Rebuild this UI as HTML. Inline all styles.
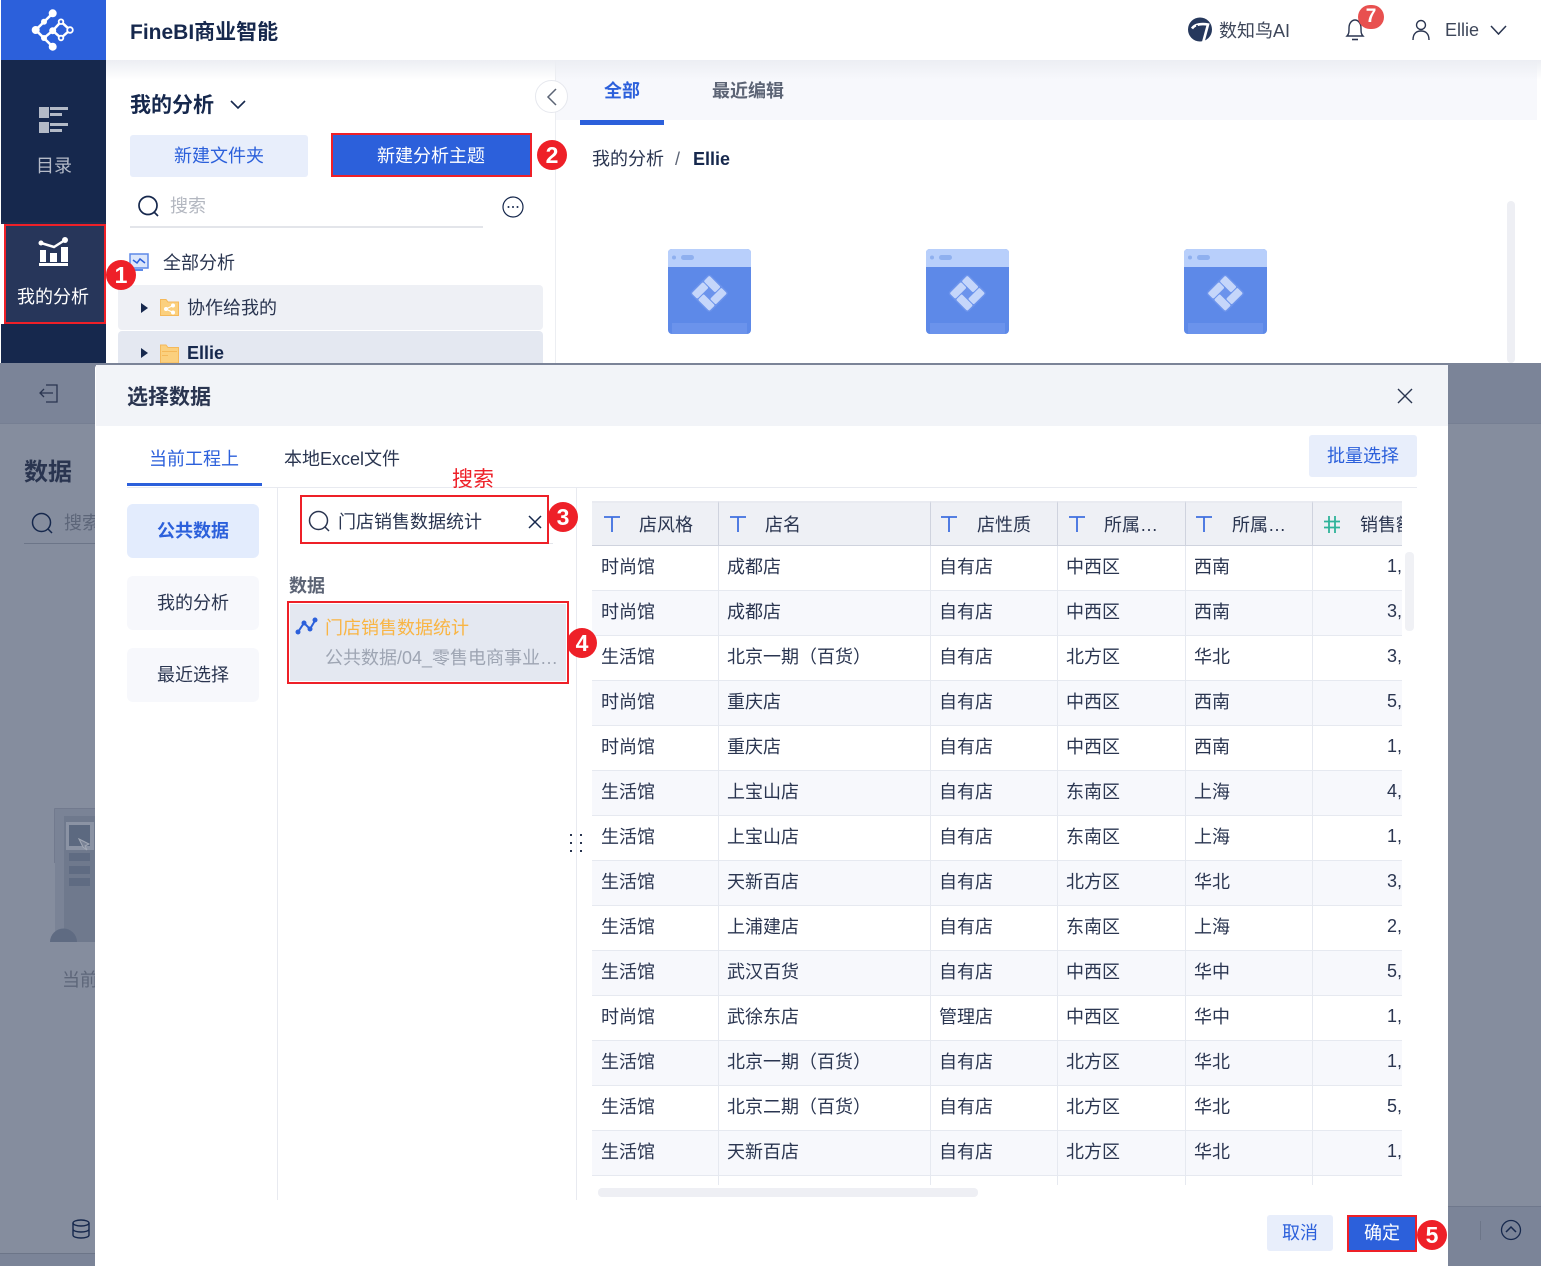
<!DOCTYPE html>
<html lang="zh"><head><meta charset="utf-8"><title>FineBI</title>
<style>
html,body{margin:0;padding:0;background:#fff}
#p{position:relative;width:1541px;height:1266px;overflow:hidden;font-family:"Liberation Sans","Noto Sans CJK SC",sans-serif;font-size:18px;color:#2a3550;background:#fff}
.a{position:absolute;white-space:nowrap}
.t{position:absolute;white-space:nowrap;line-height:24px;height:24px}
.b{font-weight:700}
.blue{color:#2c60db}
.c{position:absolute;width:30px;height:30px;border-radius:50%;background:#ee2028;color:#fff;font-size:23px;font-weight:700;line-height:30px;text-align:center;z-index:9}
.r{position:absolute;border:2px solid #ee2028;box-sizing:border-box}
svg{position:absolute;overflow:visible}
table{border-collapse:separate;border-spacing:0;table-layout:fixed;width:848px;position:absolute;left:0;top:0}
td,th{box-sizing:border-box;height:45px;padding:0 0 4px 8px;border-right:1px solid #e6e9f0;border-bottom:1px solid #e6e9f0;font-weight:400;text-align:left;white-space:nowrap;overflow:hidden;font-size:18px;color:#2a3550}
td:first-child{padding-left:9px}
th{height:45px;background:#eef0f5;padding:0 0 0 46px;border-bottom:1px solid #cfd3de;border-right:1px solid #cfd3de;border-top:2px solid #e9ebf1}
th:first-child,th:last-child{padding-left:47px}
tr:nth-child(even) td{background:#f7f8fc}
tr.e td{height:20px;padding:0}
td.n{padding-left:74px}
</style></head><body><div id="p">

<!-- top app -->
<div class="a" style="left:1px;top:0;width:105px;height:60px;background:#2c60db"></div>
<svg style="left:0;top:0" width="106" height="60"><g stroke="#fff" stroke-width="2.500" fill="none"><path d="M52.700 13.300L35.700 30L52.700 46.700M35.700 30L44 38L52.700 30.700L61 38L70 30L61 21.700L52.700 30.700"/></g><g fill="#fff"><circle cx="52.700" cy="13.300" r="4"/><circle cx="44" cy="21.700" r="3"/><circle cx="35.700" cy="30" r="4"/><circle cx="52.700" cy="30.700" r="3.500"/><circle cx="44" cy="38" r="3"/><circle cx="52.700" cy="46.700" r="4"/></g><g fill="#2c60db" stroke="#fff" stroke-width="1.800"><circle cx="61" cy="21.700" r="2.300"/><circle cx="70" cy="30" r="2.800"/><circle cx="61" cy="38" r="2.300"/></g></svg>
<div class="a" style="left:1px;top:60px;width:105px;height:303px;background:#16284d"></div>
<div class="a" style="left:0;top:222px;width:4px;height:102px;background:#fff"></div>
<div class="a" style="left:1px;top:222px;width:105px;height:2px;background:#1f2e50"></div>
<svg style="left:0;top:0" width="106" height="140"><g fill="#b3bac7"><rect x="39" y="107" width="10" height="11"/><rect x="39" y="122" width="10" height="11"/><rect x="50" y="107" width="18" height="3"/><rect x="50" y="113" width="12" height="3"/><rect x="50" y="123" width="18" height="3"/><rect x="50" y="129" width="12" height="3"/></g></svg>
<div class="t" style="left:36px;top:154px;color:#b5bbc8">目录</div>
<div class="a" style="left:4px;top:224px;width:102px;height:100px;background:#27365a;border:2px solid #ee2028;box-sizing:border-box"></div>
<svg style="left:0;top:0" width="106" height="300"><g fill="#fff"><rect x="40" y="250" width="6" height="12"/><rect x="50" y="253" width="7" height="9"/><rect x="61" y="247" width="7" height="15"/><rect x="39" y="263" width="29" height="3"/></g><path d="M41 243L54 247L65 240" stroke="#fff" stroke-width="2.500" fill="none"/><circle cx="41" cy="243" r="2.500" fill="#fff"/><circle cx="65" cy="240" r="3" fill="#fff"/></svg>
<div class="t" style="left:17px;top:285px;color:#fff">我的分析</div>

<div class="a" style="left:106px;top:60px;width:1435px;height:20px;background:linear-gradient(#eceef3,#ffffff00);z-index:3"></div>
<div class="a" style="left:556px;top:60px;width:981px;height:60px;background:#f7f8fc"></div>
<div class="a" style="left:555px;top:60px;width:1px;height:303px;background:#eceef2"></div>
<div class="t b" style="left:130px;top:21px;font-size:21px;color:#16284d">FineBI商业智能</div>
<div class="t b" style="left:130px;top:94px;font-size:21px;color:#16284d">我的分析</div>
<svg style="left:229px;top:99px" width="18" height="12"><path d="M2 2L9 9L16 2" stroke="#16284d" stroke-width="1.600" fill="none"/></svg>
<div class="a" style="left:535px;top:80px;width:33px;height:33px;border-radius:50%;background:#fff;border:1px solid #e6e8ee;box-sizing:border-box;z-index:4"></div>
<svg style="left:535px;top:80px;z-index:5" width="33" height="33"><path d="M21 9L13 17L21 25" stroke="#5c6475" stroke-width="1.500" fill="none"/></svg>
<div class="a" style="left:130px;top:135px;width:178px;height:42px;background:#e8eefb;border-radius:3px"></div>
<div class="t blue" style="left:174px;top:144px">新建文件夹</div>
<div class="a" style="left:331px;top:133px;width:201px;height:44px;background:#2c60db;border:2px solid #ee2028;box-sizing:border-box"></div>
<div class="t" style="left:377px;top:144px;color:#fff">新建分析主题</div>
<svg style="left:136px;top:194px" width="24" height="24"><circle cx="12" cy="11.500" r="9" stroke="#16284d" stroke-width="1.700" fill="none"/><path d="M18 18L22 22" stroke="#16284d" stroke-width="1.700"/></svg>
<div class="t" style="left:170px;top:194px;color:#b3b7c0">搜索</div>
<div class="a" style="left:130px;top:226px;width:353px;height:2px;background:#e3e5ea"></div>
<svg style="left:501px;top:196px" width="24" height="24"><circle cx="12" cy="11" r="10" stroke="#16284d" stroke-width="1.200" fill="none"/><circle cx="7.500" cy="11" r="1" fill="#16284d"/><circle cx="12" cy="11" r="1" fill="#16284d"/><circle cx="16.500" cy="11" r="1" fill="#16284d"/></svg>
<svg style="left:128px;top:252px" width="24" height="24"><rect x="2" y="2" width="18" height="14" fill="#dbe6fb" stroke="#5d89e8" stroke-width="1.500"/><path d="M5 8L9 11L12 7L17 11" stroke="#2c60db" stroke-width="1.500" fill="none"/><rect x="7" y="17" width="8" height="2" fill="#5d89e8"/></svg>
<div class="t" style="left:163px;top:251px">全部分析</div>
<div class="a" style="left:118px;top:285px;width:425px;height:45px;background:#eef0f5;border-radius:4px"></div>
<div class="a" style="left:118px;top:331px;width:425px;height:32px;background:#e4e8f1;border-radius:4px 4px 0 0"></div>
<svg style="left:140px;top:302px" width="10" height="60"><path d="M1 1L8 6L1 11Z" fill="#16284d"/><path d="M1 46L8 51L1 56Z" fill="#16284d"/></svg>
<svg style="left:159px;top:297px" width="22" height="21"><path d="M1.500 2.500H7L9 5H19.500V18.500H1.500Z" fill="#fbd07e" stroke="#f5b95a"/><g fill="#fff"><circle cx="7" cy="12" r="2"/><circle cx="14" cy="8.500" r="2"/><circle cx="14" cy="15.500" r="2"/></g><path d="M7 12L14 8.500M7 12L14 15.500" stroke="#fff"/></svg>
<div class="t" style="left:187px;top:296px">协作给我的</div>
<svg style="left:159px;top:343px" width="22" height="20"><path d="M1.500 2H7L9 4.500H19.500V20H1.500Z" fill="#fbd07e" stroke="#f5b95a"/><rect x="3" y="8" width="15" height="1" fill="#f5b95a"/><rect x="3" y="12" width="6" height="1" fill="#f5b95a"/></svg>
<div class="t b" style="left:187px;top:341px;color:#16284d">Ellie</div>

<svg style="left:1188px;top:17px" width="26" height="26"><circle cx="12" cy="12.500" r="12" fill="#26385c"/><path d="M4 11.500C7 7 14 6.500 20 7.500L15 26" stroke="#fff" stroke-width="2.600" fill="none"/><path d="M9 8V17" stroke="#26385c" stroke-width="1.600"/><circle cx="8.500" cy="15.500" r="2.600" fill="#26385c"/><path d="M3 13L7 12L7 20Z M11 13L13 12L11 22Z" fill="#fff" opacity="0"/></svg>
<div class="t" style="left:1219px;top:19px;color:#3d4659">数知鸟AI</div>
<svg style="left:1344px;top:18px" width="24" height="24"><path d="M3 18C5 16 5 14 5 10C5 5 8 2 11 2C14 2 17 5 17 10C17 14 17 16 19 18Z" stroke="#2a3550" stroke-width="1.400" fill="none"/><path d="M8 21.500H14" stroke="#2a3550" stroke-width="1.600"/></svg>
<div class="a" style="left:1358px;top:5px;width:26px;height:24px;border-radius:12px;background:#e8504f;color:#fff;text-align:center;line-height:24px;font-size:19px;font-weight:700">7</div>
<svg style="left:1411px;top:19px" width="20" height="22"><circle cx="10" cy="6" r="4.500" stroke="#2a3550" stroke-width="1.400" fill="none"/><path d="M2 21C2 14 6 12 10 12C14 12 18 14 18 21" stroke="#2a3550" stroke-width="1.400" fill="none"/></svg>
<div class="t" style="left:1445px;top:18px;color:#3d4659">Ellie</div>
<svg style="left:1489px;top:24px" width="19" height="13"><path d="M2 2L9.500 10L17 2" stroke="#2a3550" stroke-width="1.500" fill="none"/></svg>

<div class="t b blue" style="left:604px;top:79px">全部</div>
<div class="t b" style="left:712px;top:79px;color:#5c6475">最近编辑</div>
<div class="a" style="left:580px;top:120px;width:84px;height:5px;background:#2c60db"></div>
<div class="t" style="left:592px;top:147px;color:#2a3550">我的分析</div>
<div class="t" style="left:675px;top:147px;color:#5c6475">/</div>
<div class="t b" style="left:693px;top:147px;color:#16284d">Ellie</div>
<div class="a" style="left:1507px;top:201px;width:8px;height:162px;background:#eeeff4;border-radius:4px"></div>

<svg style="left:668px;top:249px" width="600" height="86"><defs><g id="d"><rect width="83" height="85" rx="4" fill="#5d89e8"/><path d="M0 18V4Q0 0 4 0H79Q83 0 83 4V18Z" fill="#b8cffb"/><rect x="4" y="74" width="75" height="11" fill="#6b93ec"/><circle cx="6" cy="8.500" r="2" fill="#8fb0ef"/><rect x="13" y="6" width="13" height="5" rx="2.500" fill="#8fb0ef"/><g transform="translate(41.300 44.300) rotate(45)"><rect x="-14" y="-14" width="28" height="28" rx="3" fill="#6b93ec"/><g fill="#c5d6fa"><rect x="-12.500" y="-12.500" width="16" height="8" rx="1.500"/><rect x="4.500" y="-12.500" width="8" height="16" rx="1.500"/><rect x="-3.500" y="4.500" width="16" height="8" rx="1.500"/><rect x="-12.500" y="-3.500" width="8" height="16" rx="1.500"/></g></g></g></defs><use href="#d"/><use href="#d" x="258"/><use href="#d" x="516"/></svg>

<!-- overlay background -->
<div class="a" style="left:0;top:363px;width:1541px;height:903px;background:#858d9e;z-index:10">
 <div class="a" style="left:0;top:0;width:1541px;height:60px;background:#7b8498;border-bottom:1px solid #767f93"></div>
 <svg style="left:38px;top:19px" width="24" height="24"><path d="M8 3H19V20H8M15 11H2M6 7L2 11L6 15" stroke="#2a3550" stroke-width="1.300" fill="none"/></svg>
 <div class="t b" style="left:24px;top:98px;font-size:24px;color:#2a3550">数据</div>
 <svg style="left:30px;top:148px" width="24" height="24"><circle cx="11.500" cy="11.500" r="9" stroke="#16284d" stroke-width="1.500" fill="none"/><path d="M18 18L22 22" stroke="#16284d" stroke-width="1.500"/></svg>
 <div class="t" style="left:64px;top:148px;color:#5d6679">搜索</div>
 <div class="a" style="left:24px;top:180px;width:80px;height:1px;background:#6c7588"></div>
 <svg style="left:50px;top:445px" width="50" height="135"><path d="M5 55V1H50" stroke="#6c7589" stroke-width="1.500" fill="none"/><rect x="5" y="1" width="45" height="133" fill="#7a8396"/><rect x="14" y="8" width="36" height="126" fill="#6f798d"/><rect x="16" y="14" width="28" height="28" fill="#8b93a4"/><rect x="19" y="17" width="21" height="21" fill="#5c6980"/><path d="M29 31L39 36L35 38L37 42L33 39Z" fill="#7a8396" stroke="#a3a9b6"/><rect x="19" y="45" width="21" height="8" fill="#5f6b82"/><rect x="19" y="58" width="21" height="8" fill="#5f6b82"/><rect x="19" y="70" width="21" height="8" fill="#5f6b82"/><path d="M0 134A13 13 0 0 1 27 134Z" fill="#5f6b82"/></svg>
 <div class="t" style="left:62px;top:605px;color:#5d6679">当前</div>
 <svg style="left:71px;top:856px" width="20" height="20"><ellipse cx="10" cy="4" rx="8" ry="3" fill="none" stroke="#16284d" stroke-width="1.400"/><path d="M2 4V16C2 20 18 20 18 16V4M2 10C2 14 18 14 18 10" fill="none" stroke="#16284d" stroke-width="1.400"/></svg>
 <div class="a" style="left:0;top:890px;width:100px;height:13px;background:#7b8498;border-top:1px solid #6c7588"></div>
 <div class="a" style="left:1448px;top:843px;width:93px;height:60px;background:#7b8498;border-top:1px solid #6f788c"></div>
 <div class="a" style="left:1480px;top:858px;width:1px;height:19px;background:#6c7588"></div>
 <svg style="left:1500px;top:856px" width="22" height="22"><circle cx="11" cy="11" r="9.500" fill="none" stroke="#16284d" stroke-width="1.300"/><path d="M6 13L11 8L16 13" fill="none" stroke="#16284d" stroke-width="1.500"/></svg>
</div>

<!-- modal -->
<div class="a" style="left:95px;top:365px;width:1353px;height:901px;background:#fff;z-index:11;border-radius:3px 3px 0 0;overflow:visible">
 <div class="a" style="left:1px;top:0;width:1352px;height:61px;background:#f2f4f8"></div>
 <div class="t b" style="left:32px;top:21px;font-size:21px;color:#2a3550">选择数据</div>
 <svg style="left:1302px;top:23px" width="16" height="16"><path d="M1 1L15 15M15 1L1 15" stroke="#2a3550" stroke-width="1.400"/></svg>

 <div class="t blue" style="left:54px;top:82px">当前工程上</div>
 <div class="a" style="left:32px;top:118px;width:135px;height:3px;background:#2c60db"></div>
 <div class="t" style="left:189px;top:82px">本地Excel文件</div>
 <div class="a" style="left:32px;top:122px;width:1290px;height:1px;background:#e8eaf0"></div>
 <div class="a" style="left:1214px;top:70px;width:108px;height:42px;background:#e8eefb;border-radius:3px"></div>
 <div class="t blue" style="left:1232px;top:79px">批量选择</div>
 <div class="t" style="left:357px;top:103px;font-size:21px;color:#ee2028">搜索</div>

 <div class="a" style="left:32px;top:139px;width:132px;height:54px;background:#e3ecfd;border-radius:6px"></div>
 <div class="t b blue" style="left:62px;top:154px">公共数据</div>
 <div class="a" style="left:32px;top:211px;width:132px;height:54px;background:#f7f8fc;border-radius:6px"></div>
 <div class="t" style="left:62px;top:226px">我的分析</div>
 <div class="a" style="left:32px;top:283px;width:132px;height:54px;background:#f7f8fc;border-radius:6px"></div>
 <div class="t" style="left:62px;top:298px">最近选择</div>

 <div class="a" style="left:182px;top:123px;width:1px;height:712px;background:#e8eaf0"></div>
 <div class="a" style="left:481px;top:123px;width:1px;height:712px;background:#e8eaf0"></div>
 <div class="a" style="left:205px;top:178px;width:253px;height:1px;background:#e3e5ea"></div>
 <div class="r" style="left:205px;top:130px;width:249px;height:49px"></div>
 <svg style="left:212px;top:144px" width="24" height="24"><circle cx="11.500" cy="11.500" r="9" stroke="#2a3550" stroke-width="1.500" fill="none"/><path d="M18 18L22 22" stroke="#2a3550" stroke-width="1.500"/></svg>
 <div class="t" style="left:243px;top:145px">门店销售数据统计</div>
 <svg style="left:432px;top:149px" width="16" height="16"><path d="M2 2L14 14M14 2L2 14" stroke="#16284d" stroke-width="1.500"/></svg>
 <div class="t b" style="left:194px;top:209px;color:#5c6475">数据</div>
 <div class="r" style="left:192px;top:236px;width:282px;height:83px;background:#e4e8f1;box-shadow:inset 0 0 0 1px #fff"></div>
 <svg style="left:200px;top:250px" width="24" height="22"><path d="M3 17L9 8L15 14L21 4" stroke="#2c60db" stroke-width="2" fill="none"/><circle cx="3" cy="17" r="2.500" fill="#2c60db"/><circle cx="9" cy="8" r="2.500" fill="#2c60db"/><circle cx="15" cy="14" r="2.500" fill="#2c60db"/><circle cx="20" cy="5" r="2.500" fill="#2c60db"/></svg>
 <div class="t" style="left:230px;top:251px;color:#f9b544">门店销售数据统计</div>
 <div class="t" style="left:230px;top:281px;color:#9ea5b3">公共数据/04_零售电商事业…</div>

 <svg style="left:470px;top:465px" width="20" height="24"><g fill="#2a3550"><rect x="5" y="4" width="2" height="2"/><rect x="15" y="4" width="2" height="2"/><rect x="5" y="12" width="2" height="2"/><rect x="15" y="12" width="2" height="2"/><rect x="5" y="20" width="2" height="2"/><rect x="15" y="20" width="2" height="2"/></g></svg>

 <!-- table -->
 <div class="a" style="left:497px;top:136px;width:810px;height:684px;overflow:hidden">
 <table><colgroup><col style="width:127px"><col style="width:212px"><col style="width:127px"><col style="width:128px"><col style="width:127px"><col style="width:127px"></colgroup>
 <thead><tr><th>店风格</th><th>店名</th><th>店性质</th><th>所属…</th><th>所属…</th><th>销售额</th></tr></thead>
 <tbody>
 <tr><td>时尚馆</td><td>成都店</td><td>自有店</td><td>中西区</td><td>西南</td><td class="n">1,</td></tr>
 <tr><td>时尚馆</td><td>成都店</td><td>自有店</td><td>中西区</td><td>西南</td><td class="n">3,</td></tr>
 <tr><td>生活馆</td><td>北京一期（百货）</td><td>自有店</td><td>北方区</td><td>华北</td><td class="n">3,</td></tr>
 <tr><td>时尚馆</td><td>重庆店</td><td>自有店</td><td>中西区</td><td>西南</td><td class="n">5,</td></tr>
 <tr><td>时尚馆</td><td>重庆店</td><td>自有店</td><td>中西区</td><td>西南</td><td class="n">1,</td></tr>
 <tr><td>生活馆</td><td>上宝山店</td><td>自有店</td><td>东南区</td><td>上海</td><td class="n">4,</td></tr>
 <tr><td>生活馆</td><td>上宝山店</td><td>自有店</td><td>东南区</td><td>上海</td><td class="n">1,</td></tr>
 <tr><td>生活馆</td><td>天新百店</td><td>自有店</td><td>北方区</td><td>华北</td><td class="n">3,</td></tr>
 <tr><td>生活馆</td><td>上浦建店</td><td>自有店</td><td>东南区</td><td>上海</td><td class="n">2,</td></tr>
 <tr><td>生活馆</td><td>武汉百货</td><td>自有店</td><td>中西区</td><td>华中</td><td class="n">5,</td></tr>
 <tr><td>时尚馆</td><td>武徐东店</td><td>管理店</td><td>中西区</td><td>华中</td><td class="n">1,</td></tr>
 <tr><td>生活馆</td><td>北京一期（百货）</td><td>自有店</td><td>北方区</td><td>华北</td><td class="n">1,</td></tr>
 <tr><td>生活馆</td><td>北京二期（百货）</td><td>自有店</td><td>北方区</td><td>华北</td><td class="n">5,</td></tr>
 <tr><td>生活馆</td><td>天新百店</td><td>自有店</td><td>北方区</td><td>华北</td><td class="n">1,</td></tr>
 <tr class="e"><td></td><td></td><td></td><td></td><td></td><td></td></tr>
 </tbody></table>
 <svg style="left:0;top:0" width="810" height="45"><g stroke="#3f6fe0" stroke-width="1.800" fill="none"><path d="M12 16H28M20 16V31"/><path d="M138 16H154M146 16V31"/><path d="M349 16H365M357 16V31"/><path d="M477 16H493M485 16V31"/><path d="M604 16H620M612 16V31"/></g><g stroke="#2fb39a" stroke-width="1.800" fill="none"><path d="M732 20.500H748M732 26.500H748M737 15V32M743 15V32"/></g></svg>
 </div>
 <div class="a" style="left:1310px;top:187px;width:9px;height:79px;background:#f0f1f5;border-radius:4px"></div>
 <div class="a" style="left:503px;top:823px;width:380px;height:9px;background:#eeeff4;border-radius:4px"></div>

 <div class="a" style="left:1172px;top:850px;width:66px;height:36px;background:#e8eefb;border-radius:3px"></div>
 <div class="t blue" style="left:1187px;top:856px">取消</div>
 <div class="a" style="left:1252px;top:850px;width:70px;height:37px;background:#2c60db;border:2px solid #ee2028;box-sizing:border-box"></div>
 <div class="t" style="left:1269px;top:856px;color:#fff">确定</div>
</div>

<div class="c" style="left:106px;top:260px;z-index:20">1</div>
<div class="c" style="left:537px;top:140px;z-index:20">2</div>
<div class="c" style="left:548px;top:502px;z-index:20">3</div>
<div class="c" style="left:567px;top:628px;z-index:20">4</div>
<div class="c" style="left:1417px;top:1220px;z-index:20">5</div>
</div></body></html>
